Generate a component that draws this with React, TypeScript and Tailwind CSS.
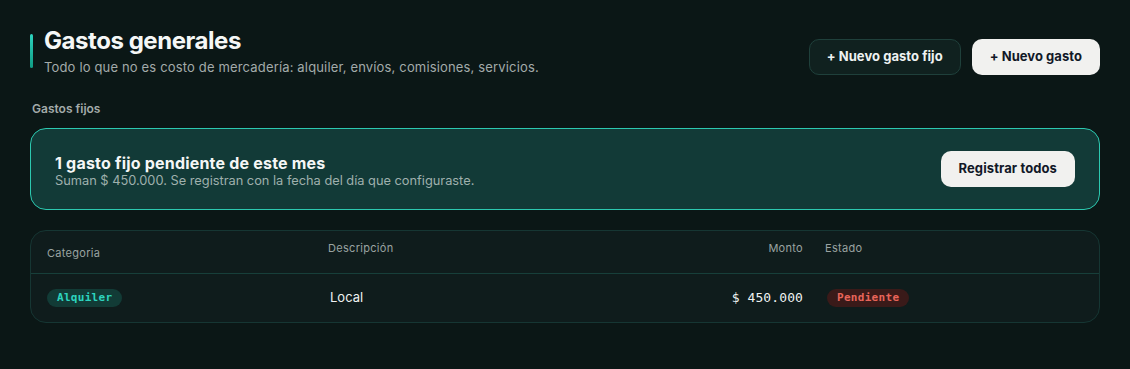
import React from "react";

export default function App() {
  return (
    <div className="min-h-[369px] w-full bg-[#0b1716] px-[30px] pt-[27px] pb-[46px] text-white" style={{ fontFamily: "Inter, 'Noto Sans', sans-serif" }}>
      <div className="flex items-start justify-between">
        <div className="flex items-start gap-[11px]">
          <div className="mt-[7px] h-[34px] w-[3px] rounded-full bg-gradient-to-b from-[#2dd4bf] to-[#0f9c84]" />
          <div>
            <h1 className="text-[24px] font-bold leading-[28px] tracking-[-0.45px] text-[#f5f7f6]">Gastos generales</h1>
            <p className="mt-[3px] text-[13px] leading-[18px] tracking-[0.16px] text-[#a3abaa]">Todo lo que no es costo de mercadería: alquiler, envíos, comisiones, servicios.</p>
          </div>
        </div>
        <div className="mt-[12px] flex gap-[11px]">
          <button className="h-[36px] rounded-[10px] border border-[#1f403b] bg-[#10211f] px-[17px] text-[13px] font-bold tracking-[0.05px] text-[#eef2f1]">+ Nuevo gasto fijo</button>
          <button className="h-[36px] rounded-[10px] bg-[#f1f1ef] px-[18px] text-[13px] font-bold tracking-[0.05px] text-[#111827]">+ Nuevo gasto</button>
        </div>
      </div>

      <div className="mt-[25px] pl-[2px] text-[12px] font-semibold leading-[16px] text-[#a3abaa]">Gastos fijos</div>

      <div className="mt-[11px] flex h-[82px] items-center justify-between rounded-[16px] border border-[#2cc9b0] bg-[#123a37] pl-[24px] pr-[24px]">
        <div className="pt-[4px]">
          <div className="text-[16px] font-bold leading-[20px] tracking-[0.2px] text-[#f5f7f6]">1 gasto fijo pendiente de este mes</div>
          <div className="text-[12.8px] leading-[16px] text-[#9fb0ad]">Suman $ 450.000. Se registran con la fecha del día que configuraste.</div>
        </div>
        <button className="h-[36px] rounded-[10px] bg-[#f1f1ef] px-[18px] text-[13px] font-bold tracking-[0.1px] text-[#111827]">Registrar todos</button>
      </div>

      <div className="mt-[20px] overflow-hidden rounded-[16px] border border-[#163633] bg-[#0f1c1c]">
        <div className="grid h-[43px] grid-cols-[281px_308px_191px_1fr] border-b border-[#173f3a] text-[11px] tracking-[0.3px] text-[#9aa3a1]">
          <div className="pl-[16px] pt-[14px]">Categoria</div>
          <div className="pl-[16px] pt-[9px]">Descripción</div>
          <div className="pr-[8px] pt-[9px] text-right">Monto</div>
          <div className="pl-[14px] pt-[9px]">Estado</div>
        </div>
        <div className="grid h-[48px] grid-cols-[281px_308px_191px_1fr] items-center">
          <div className="flex items-center pl-[16px]">
            <span className="flex h-[18px] items-center rounded-full bg-[#123b36] px-[10px] text-[11px] font-bold tracking-[0.3px] text-[#2dd4bf]" style={{ fontFamily: "'DejaVu Sans Mono', monospace" }}>Alquiler</span>
          </div>
          <div className="pl-[18px] text-[13px] text-[#eef2f1]">Local</div>
          <div className="pr-[8px] text-right text-[13px] tracking-[0.1px] text-[#eef2f1]" style={{ fontFamily: "'DejaVu Sans Mono', monospace" }}>$ 450.000</div>
          <div className="flex items-center pl-[16px]">
            <span className="flex h-[18px] items-center rounded-full bg-[#3a1a19] px-[10px] text-[11px] font-bold tracking-[0.3px] text-[#e8655a]" style={{ fontFamily: "'DejaVu Sans Mono', monospace" }}>Pendiente</span>
          </div>
        </div>
      </div>
    </div>
  );
}
